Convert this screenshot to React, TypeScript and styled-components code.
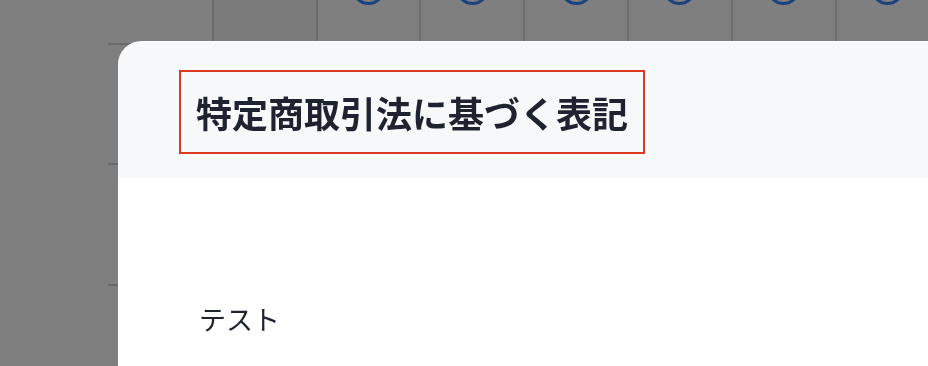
import React, { FC } from "react";
import styled, { createGlobalStyle } from "styled-components";

const GlobalStyle = createGlobalStyle`
  html, body {
    margin: 0;
    padding: 0;
    background: #ffffff;
    overflow: hidden;
  }

  body {
    font-family: "Noto Sans CJK JP", "Noto Sans", sans-serif;
    color: #1f2330;
  }
`;

const days = [
  { id: 1, open: false, today: false },
  { id: 2, open: false, today: true },
  { id: 3, open: true, today: false },
  { id: 4, open: true, today: false },
  { id: 5, open: true, today: false },
  { id: 6, open: true, today: false },
  { id: 7, open: true, today: false },
  { id: 8, open: true, today: false },
];

const hours = [9, 10, 11, 12];

const Page = styled.div`
  height: 100vh;
  overflow: hidden;
`;

// the week grid is scrolled, so the first hour row starts above the window
const Calendar = styled.div`
  margin-top: -76px;
`;

const HourRow = styled.div`
  display: grid;
  grid-template-columns: 108px repeat(8, 103.8px);
  height: 120.5px;
`;

const Gutter = styled.div`
  background: #ffffff;
`;

const DayCell = styled.div<{ $first: boolean; $today: boolean }>`
  display: flex;
  justify-content: center;
  padding-top: 48px;
  box-sizing: border-box;
  background: ${(p) => (p.$today ? "#f7f7f8" : "#ffffff")};
  border-left: ${(p) => (p.$first ? "0" : "2px solid #d9d9d9")};
  border-bottom: 2px solid #d5d5d5;
`;

const Ring = styled.span`
  width: 27px;
  height: 27px;
  border-radius: 50%;
  border: 3px solid #3a82ff;
`;

const Backdrop = styled.div`
  position: fixed;
  inset: 0;
  background: rgba(0, 0, 0, 0.5);
`;

const Modal = styled.div`
  position: fixed;
  top: 41px;
  left: 118px;
  right: 0;
  bottom: 0;
  padding-top: 1px;
  background: #ffffff;
  border-radius: 24px 0 0 0;
  overflow: hidden;
`;

const ModalHeader = styled.div`
  padding: 28px 61px 23px;
  background: #f7f8fa;
`;

const Title = styled.h2`
  display: inline-block;
  margin: 0;
  padding: 13px 15px;
  border: 2px solid #d9391f;
  font-size: 36px;
  line-height: 54px;
  font-weight: 700;
  color: #1f2330;
`;

const ModalBody = styled.div`
  padding: 122px 0 0 81px;
  font-size: 27px;
  line-height: 39px;
  color: #1f2330;
`;

const App: FC = () => {
  return (
    <Page>
      <GlobalStyle />
      <Calendar>
        {hours.map((h) => (
          <HourRow key={h}>
            <Gutter />
            {days.map((d, i) => (
              <DayCell key={d.id} $first={i === 0} $today={d.today}>
                {h === hours[0] && d.open && <Ring />}
              </DayCell>
            ))}
          </HourRow>
        ))}
      </Calendar>
      <Backdrop />
      <Modal>
        <ModalHeader>
          <Title>特定商取引法に基づく表記</Title>
        </ModalHeader>
        <ModalBody>テスト</ModalBody>
      </Modal>
    </Page>
  );
};

export default App;
